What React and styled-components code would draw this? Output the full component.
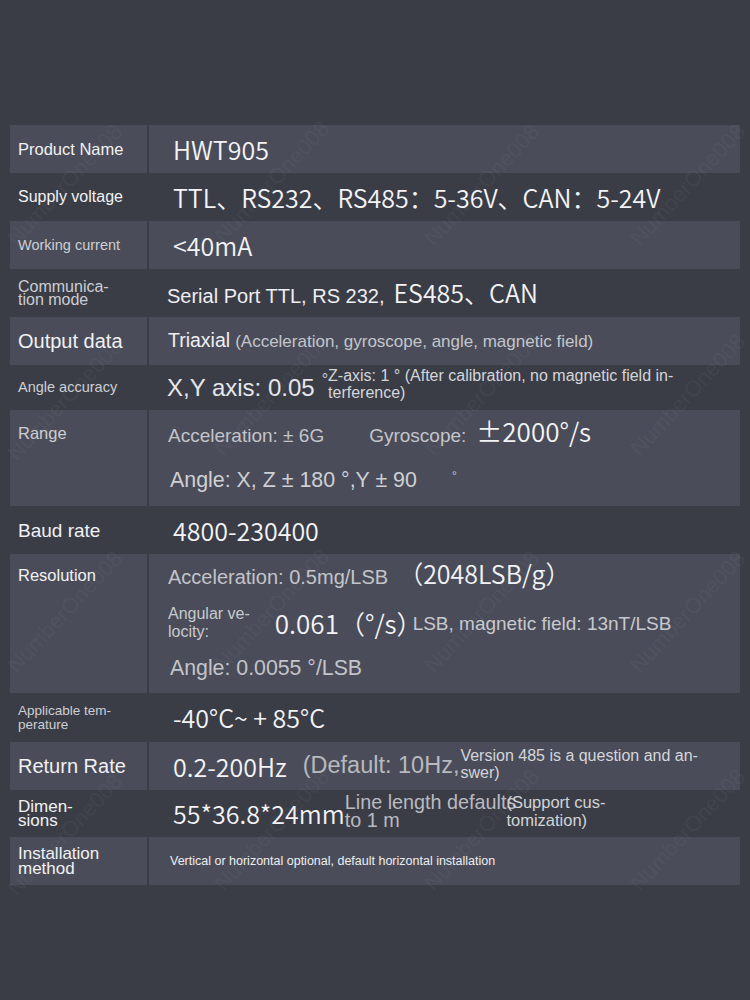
import React from 'react';
import styled, { createGlobalStyle } from 'styled-components';

const GlobalStyle = createGlobalStyle`
  html, body {
    margin: 0;
    padding: 0;
    background: #3a3d46;
  }
  body {
    font-family: "Liberation Sans", Arial, sans-serif;
  }
`;

const Page = styled.div`
  position: relative;
  width: 750px;
  height: 1000px;
  overflow: hidden;
  box-sizing: border-box;
  padding: 125px 10px 0;
  background: #3a3d46;
`;

const Table = styled.div`
  display: flex;
  flex-direction: column;
`;

const Row = styled.div`
  display: grid;
  grid-template-columns: 137px 591px;
  column-gap: 2px;
  height: ${(p) => p.$h || 48}px;
`;

const Label = styled.div`
  box-sizing: border-box;
  background: ${(p) => (p.$light ? '#4a4d59' : 'transparent')};
  padding: ${(p) => (p.$top ? `${p.$top}px 8px 0` : '0 8px')};
  display: flex;
  align-items: ${(p) => (p.$top ? 'flex-start' : 'center')};
  font-size: ${(p) => p.$size || 16}px;
  line-height: ${(p) => (p.$lh ? `${p.$lh}px` : 1)};
  color: ${(p) => (p.$dim ? '#cdced3' : '#f1f1f4')};
`;

const Value = styled.div`
  box-sizing: border-box;
  background: ${(p) => (p.$light ? '#4a4d59' : 'transparent')};
  padding: ${(p) => (p.$top ? `${p.$top}px` : 0)} 0 0 ${(p) => p.$left ?? 24}px;
  display: flex;
  flex-direction: ${(p) => (p.$col ? 'column' : 'row')};
  align-items: ${(p) => (p.$col ? 'flex-start' : 'center')};
  white-space: nowrap;
`;

const Line = styled.div`
  display: flex;
  align-items: ${(p) => p.$align || 'baseline'};
  margin: ${(p) => p.$mt || 0}px 0 0 ${(p) => p.$ml || 0}px;
`;

const Big = styled.span`
  font-family: "Noto Sans CJK SC", "Noto Sans", sans-serif;
  font-weight: 350;
  font-size: ${(p) => p.$size || 25}px;
  line-height: 1;
  color: #f3f3f6;
  margin-left: ${(p) => p.$ml || 0}px;
`;

const Txt = styled.span`
  font-size: ${(p) => p.$size}px;
  line-height: 1;
  color: ${(p) => p.$color || '#c3c4ca'};
  margin-left: ${(p) => p.$ml || 0}px;
`;

const Stack = styled.span`
  display: inline-block;
  font-size: ${(p) => p.$size}px;
  line-height: ${(p) => p.$lh}px;
  color: ${(p) => p.$color || '#d4d5d9'};
  margin-left: ${(p) => p.$ml || 0}px;
  margin-bottom: ${(p) => p.$mb || 0}px;
`;

const Deg = styled.span`
  font-size: ${(p) => p.$size || 14}px;
  line-height: 1;
  color: #c9cacf;
  margin-left: ${(p) => p.$ml || 0}px;
  margin-bottom: ${(p) => p.$mb || 0}px;
  align-self: ${(p) => (p.$start ? 'flex-start' : 'auto')};
`;

const Marks = styled.div`
  position: absolute;
  inset: 0;
  pointer-events: none;
`;

const Mark = styled.span`
  position: absolute;
  font-size: 22px;
  color: rgba(255, 255, 255, 0.05);
  transform: translate(-50%, -50%) rotate(-47deg);
  white-space: nowrap;
`;

const markSpots = [
  [65, 185], [272, 182], [482, 185], [688, 185],
  [65, 400], [272, 395], [482, 395], [688, 395],
  [65, 612], [272, 610], [482, 612], [688, 612],
  [65, 835], [272, 830], [482, 830], [688, 830],
];

const App = () => (
  <Page>
    <GlobalStyle />
    <Table>
      <Row>
        <Label $light $size={16.5}>Product Name</Label>
        <Value $light>
          <Big>HWT905</Big>
        </Value>
      </Row>

      <Row>
        <Label $size={16}>Supply voltage</Label>
        <Value>
          <Big>TTL、RS232、RS485：5-36V、CAN：5-24V</Big>
        </Value>
      </Row>

      <Row>
        <Label $light $dim $size={14.5}>Working current</Label>
        <Value $light>
          <Big>&lt;40mA</Big>
        </Value>
      </Row>

      <Row>
        <Label $dim $size={16} $lh={13}>
          Communica-
          <br />
          tion mode
        </Label>
        <Value $left={18}>
          <Line>
            <Txt $size={20} $color="#eeeef1">Serial Port TTL, RS 232, </Txt>
            <Big $ml={9}>ES485、CAN</Big>
          </Line>
        </Value>
      </Row>

      <Row>
        <Label $light $size={20}>Output data</Label>
        <Value $light $left={19}>
          <Line>
            <Txt $size={19.5} $color="#efeff2">Triaxial</Txt>
            <Txt $size={17} $color="#c4c5cb" $ml={5}>
              (Acceleration, gyroscope, angle, magnetic field)
            </Txt>
          </Line>
        </Value>
      </Row>

      <Row $h={45}>
        <Label $dim $size={14.5}>Angle accuracy</Label>
        <Value $left={18}>
          <Txt $size={24} $color="#e6e6ea">X,Y axis: 0.05</Txt>
          <Deg $size={16} $ml={7} $mb={16}>°</Deg>
          <Stack $size={16} $lh={17} $ml={0} $mb={8}>
            Z-axis: 1 ° (After calibration, no magnetic field in-
            <br />
            terference)
          </Stack>
        </Value>
      </Row>

      <Row $h={96}>
        <Label $light $dim $size={16.5} $top={15}>Range</Label>
        <Value $light $col $left={19} $top={8}>
          <Line>
            <Txt $size={19}>Acceleration: ± 6G</Txt>
            <Txt $size={19} $ml={45}>Gyroscope:</Txt>
            <Big $size={26} $ml={10}>±2000°/s</Big>
          </Line>
          <Line $mt={25} $ml={2}>
            <Txt $size={21.4} $color="#cfd0d5">Angle: X, Z ± 180 °,Y ± 90</Txt>
            <Deg $size={12} $ml={35} $start>°</Deg>
          </Line>
        </Value>
      </Row>

      <Row>
        <Label $size={19}>Baud rate</Label>
        <Value>
          <Big>4800-230400</Big>
        </Value>
      </Row>

      <Row $h={139}>
        <Label $light $size={16.5} $top={13}>Resolution</Label>
        <Value $light $col $left={19} $top={7}>
          <Line>
            <Txt $size={20}>Acceleration: 0.5mg/LSB</Txt>
            <Big $ml={10}>（2048LSB/g）</Big>
          </Line>
          <Line $mt={18} $align="center">
            <Stack $size={16} $lh={18} $color="#c8c9ce">
              Angular ve-
              <br />
              locity:
            </Stack>
            <Big $size={26} $ml={25}>0.061（°/s）</Big>
            <Txt $size={19} $color="#c8c9ce" $ml={-10}>LSB, magnetic field: 13nT/LSB</Txt>
          </Line>
          <Line $mt={17} $ml={2}>
            <Txt $size={21.3}>Angle: 0.0055 °/LSB</Txt>
          </Line>
        </Value>
      </Row>

      <Row $h={49}>
        <Label $dim $size={13.5} $lh={14}>
          Applicable tem-
          <br />
          perature
        </Label>
        <Value>
          <Big>-40°C~ + 85°C</Big>
        </Value>
      </Row>

      <Row>
        <Label $light $size={20}>Return Rate</Label>
        <Value $light>
          <Big>0.2-200Hz</Big>
          <Txt $size={23.5} $color="#b8b9bf" $ml={16}>(Default: 10Hz,</Txt>
          <Stack $size={16} $lh={17} $ml={1} $mb={4}>
            Version 485 is a question and an-
            <br />
            swer)
          </Stack>
        </Value>
      </Row>

      <Row $h={47}>
        <Label $size={17} $lh={14}>
          Dimen-
          <br />
          sions
        </Label>
        <Value>
          <Big $size={25}>55*36.8*24mm</Big>
          <Stack $size={19.8} $lh={18} $color="#b9bac0" $mb={6}>
            Line length defaults
            <br />
            to 1 m
          </Stack>
          <Stack $size={16.5} $lh={18} $color="#d2d3d7" $ml={-10} $mb={6}>
            (Support cus-
            <br />
            tomization)
          </Stack>
        </Value>
      </Row>

      <Row>
        <Label $light $size={17} $lh={15}>
          Installation
          <br />
          method
        </Label>
        <Value $light $left={21}>
          <Txt $size={12.5} $color="#eeeef1">
            Vertical or horizontal optional, default horizontal installation
          </Txt>
        </Value>
      </Row>
    </Table>

    <Marks>
      {markSpots.map(([x, y], i) => (
        <Mark key={i} style={{ left: x, top: y }}>NumberOne008</Mark>
      ))}
    </Marks>
  </Page>
);

export default App;
